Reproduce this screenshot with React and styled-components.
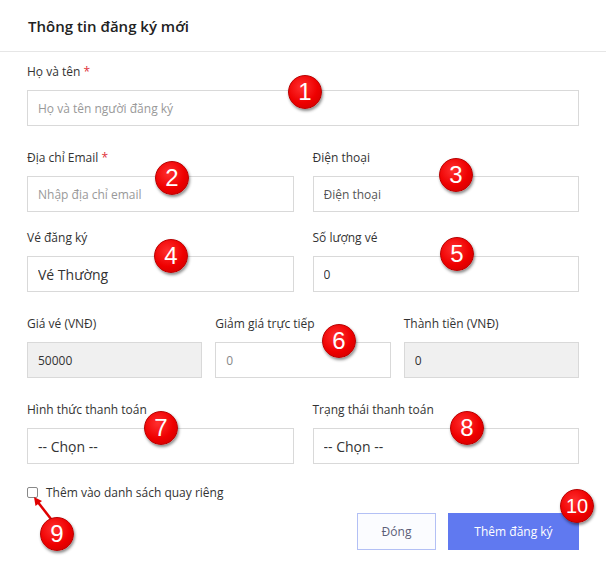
import React from 'react';
import styled, { createGlobalStyle } from 'styled-components';

const GlobalStyle = createGlobalStyle`
  html, body {
    margin: 0;
    padding: 0;
    background: #fff;
  }
  body {
    font-family: 'Open Sans', 'Noto Sans', Arial, sans-serif;
    color: #333;
  }
  * {
    box-sizing: border-box;
  }
`;

const Page = styled.div`
  position: relative;
  width: 606px;
  height: 567px;
  overflow: hidden;
  background: #fff;
`;

const Header = styled.div`
  height: 52px;
  display: flex;
  align-items: center;
  padding-left: 28px;
  border-bottom: 1px solid #e6e6e6;
  font-size: 15px;
  font-weight: 600;
  color: #222;
`;

const Body = styled.div`
  padding: 11px 27px 0 27px;
`;

const Row = styled.div`
  display: grid;
  grid-template-columns: repeat(${(p) => p.cols || 1}, 1fr);
  column-gap: ${(p) => (p.cols === 3 ? 13 : 19)}px;
  margin-top: ${(p) => p.top || 0}px;
`;

const Field = styled.div`
  display: flex;
  flex-direction: column;
`;

const Label = styled.label`
  font-size: 12px;
  line-height: 18px;
  color: #333;
  margin-bottom: 9px;
  white-space: nowrap;
`;

const Star = styled.span`
  color: #e0303a;
`;

const Input = styled.input`
  height: 36px;
  width: 100%;
  border: 1px solid #d9d9d9;
  border-radius: 0;
  padding: 0 10px;
  font-family: 'Open Sans', 'Noto Sans', Arial, sans-serif;
  font-size: ${(p) => (p.big ? 14 : 12)}px;
  color: ${(p) => (p.muted ? '#888' : '#333')};
  background: ${(p) => (p.disabled ? '#f0f0f0' : '#fff')};
  outline: none;
  &::placeholder {
    color: ${(p) => (p.dark ? '#555' : '#999')};
  }
`;

const CheckRow = styled.div`
  display: flex;
  align-items: center;
  gap: 8px;
  margin-top: 20px;
  font-size: 12px;
  color: #333;
`;

const Check = styled.input`
  appearance: none;
  width: 11px;
  height: 11px;
  margin: 0;
  border: 1px solid #888;
  border-radius: 2px;
  background: #fff;
`;

const Actions = styled.div`
  display: flex;
  justify-content: flex-end;
  gap: 12px;
  margin-top: 12px;
`;

const Button = styled.button`
  height: 37px;
  width: ${(p) => p.w}px;
  font-family: 'Open Sans', 'Noto Sans', Arial, sans-serif;
  font-size: 12px;
  border: 1px solid ${(p) => (p.primary ? '#6079f0' : '#b3c0f5')};
  background: ${(p) => (p.primary ? '#6079f0' : '#fbfcff')};
  color: ${(p) => (p.primary ? '#fff' : '#5b5f78')};
  cursor: pointer;
`;

const Badge = styled.div`
  position: absolute;
  left: ${(p) => p.x - 17}px;
  top: ${(p) => p.y - 17}px;
  width: 34px;
  height: 34px;
  border-radius: 50%;
  background: radial-gradient(circle at 40% 35%, #ff3030 0%, #ee0000 55%, #c80000 100%);
  border: 1px solid #b80000;
  box-shadow: 1px 2px 3px rgba(0, 0, 0, 0.45);
  color: #fff;
  font-family: 'Liberation Sans', Arial, sans-serif;
  font-size: ${(p) => (p.small ? 20 : 24)}px;
  display: flex;
  align-items: center;
  justify-content: center;
  line-height: 1;
`;

const ArrowSvg = styled.svg`
  position: absolute;
  left: 20px;
  top: 482px;
`;

const badges = [
  { n: 1, x: 305, y: 92 },
  { n: 2, x: 172, y: 178 },
  { n: 3, x: 456, y: 175 },
  { n: 4, x: 171, y: 256 },
  { n: 5, x: 457, y: 254 },
  { n: 6, x: 339, y: 341 },
  { n: 7, x: 161, y: 428 },
  { n: 8, x: 467, y: 428 },
  { n: 9, x: 57, y: 534 },
  { n: 10, x: 577, y: 506, small: true },
];

const App = () => {
  return (
    <Page>
      <GlobalStyle />
      <Header>Thông tin đăng ký mới</Header>
      <Body>
        <Row>
          <Field>
            <Label>
              Họ và tên <Star>*</Star>
            </Label>
            <Input placeholder="Họ và tên người đăng ký" />
          </Field>
        </Row>
        <Row cols={2} top={23}>
          <Field>
            <Label>
              Địa chỉ Email <Star>*</Star>
            </Label>
            <Input placeholder="Nhập địa chỉ email" />
          </Field>
          <Field>
            <Label>Điện thoại</Label>
            <Input dark placeholder="Điện thoại" />
          </Field>
        </Row>
        <Row cols={2} top={17}>
          <Field>
            <Label>Vé đăng ký</Label>
            <Input big readOnly value="Vé Thường" />
          </Field>
          <Field>
            <Label>Số lượng vé</Label>
            <Input readOnly value="0" />
          </Field>
        </Row>
        <Row cols={3} top={23}>
          <Field>
            <Label>Giá vé (VNĐ)</Label>
            <Input disabled value="50000" />
          </Field>
          <Field>
            <Label>Giảm giá trực tiếp</Label>
            <Input muted readOnly value="0" />
          </Field>
          <Field>
            <Label>Thành tiền (VNĐ)</Label>
            <Input disabled value="0" />
          </Field>
        </Row>
        <Row cols={2} top={23}>
          <Field>
            <Label>Hình thức thanh toán</Label>
            <Input big readOnly value="-- Chọn --" />
          </Field>
          <Field>
            <Label>Trạng thái thanh toán</Label>
            <Input big readOnly value="-- Chọn --" />
          </Field>
        </Row>
        <CheckRow>
          <Check type="checkbox" />
          <span>Thêm vào danh sách quay riêng</span>
        </CheckRow>
        <Actions>
          <Button w={79}>Đóng</Button>
          <Button primary w={131}>
            Thêm đăng ký
          </Button>
        </Actions>
      </Body>

      <ArrowSvg width="40" height="40" viewBox="0 0 40 40">
        <line x1="31" y1="37" x2="17" y2="19" stroke="#e00000" strokeWidth="2.5" />
        <polygon points="14,15 22,19 15.5,24" fill="#e00000" />
      </ArrowSvg>
      {badges.map((b) => (
        <Badge key={b.n} x={b.x} y={b.y} small={b.small}>
          {b.n}
        </Badge>
      ))}
    </Page>
  );
};

export default App;
